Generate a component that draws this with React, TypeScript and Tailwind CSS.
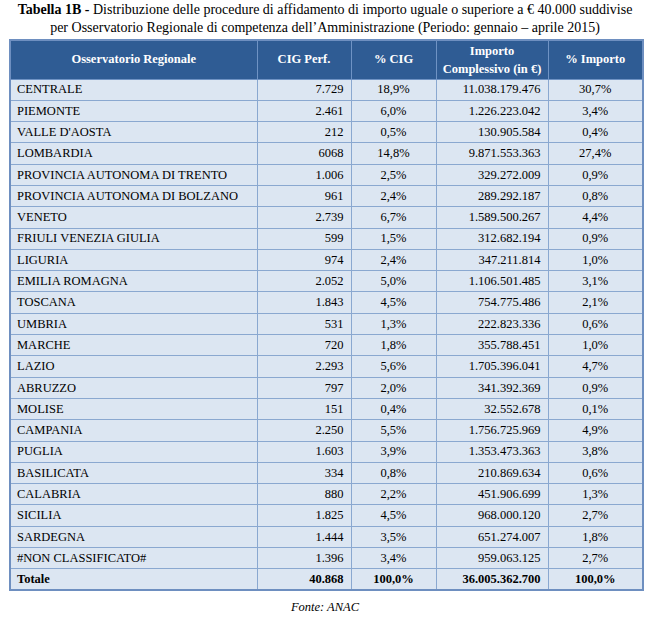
import React from "react";

const rows: [string, string, string, string, string][] = [
  ["CENTRALE", "7.729", "18,9%", "11.038.179.476", "30,7%"],
  ["PIEMONTE", "2.461", "6,0%", "1.226.223.042", "3,4%"],
  ["VALLE D'AOSTA", "212", "0,5%", "130.905.584", "0,4%"],
  ["LOMBARDIA", "6068", "14,8%", "9.871.553.363", "27,4%"],
  ["PROVINCIA AUTONOMA DI TRENTO", "1.006", "2,5%", "329.272.009", "0,9%"],
  ["PROVINCIA AUTONOMA DI BOLZANO", "961", "2,4%", "289.292.187", "0,8%"],
  ["VENETO", "2.739", "6,7%", "1.589.500.267", "4,4%"],
  ["FRIULI VENEZIA GIULIA", "599", "1,5%", "312.682.194", "0,9%"],
  ["LIGURIA", "974", "2,4%", "347.211.814", "1,0%"],
  ["EMILIA ROMAGNA", "2.052", "5,0%", "1.106.501.485", "3,1%"],
  ["TOSCANA", "1.843", "4,5%", "754.775.486", "2,1%"],
  ["UMBRIA", "531", "1,3%", "222.823.336", "0,6%"],
  ["MARCHE", "720", "1,8%", "355.788.451", "1,0%"],
  ["LAZIO", "2.293", "5,6%", "1.705.396.041", "4,7%"],
  ["ABRUZZO", "797", "2,0%", "341.392.369", "0,9%"],
  ["MOLISE", "151", "0,4%", "32.552.678", "0,1%"],
  ["CAMPANIA", "2.250", "5,5%", "1.756.725.969", "4,9%"],
  ["PUGLIA", "1.603", "3,9%", "1.353.473.363", "3,8%"],
  ["BASILICATA", "334", "0,8%", "210.869.634", "0,6%"],
  ["CALABRIA", "880", "2,2%", "451.906.699", "1,3%"],
  ["SICILIA", "1.825", "4,5%", "968.000.120", "2,7%"],
  ["SARDEGNA", "1.444", "3,5%", "651.274.007", "1,8%"],
  ["#NON CLASSIFICATO#", "1.396", "3,4%", "959.063.125", "2,7%"],
];

const td = "border border-[#8aa8d0] h-[21.3px] py-0 leading-none font-['Liberation_Serif',serif]";
const th = "border border-[#6f93c4] text-center font-bold font-['Liberation_Serif',serif]";

export default function App() {
  return (
    <div className="w-[650px] h-[623px] bg-white text-black overflow-hidden font-['Liberation_Serif',serif]">
      <div className="pt-[1px] text-center text-[14px] leading-[18px] whitespace-nowrap font-['Liberation_Serif',serif]">
        <div>
          <span className="font-bold">Tabella 1B - </span>
          Distribuzione delle procedure di affidamento di importo uguale o superiore a € 40.000 suddivise
        </div>
        <div>
          per Osservatorio Regionale di competenza dell’Amministrazione (Periodo: gennaio – aprile 2015)
        </div>
      </div>
      <div className="pl-[9px] pt-[2px]">
        <table className="table-fixed border-collapse border-2 border-[#6e8fc0] text-[12.5px] w-[633px] font-['Liberation_Serif',serif]">
          <colgroup>
            <col className="w-[247px]" />
            <col className="w-[94px]" />
            <col className="w-[85px]" />
            <col className="w-[112px]" />
            <col className="w-[95px]" />
          </colgroup>
          <thead>
            <tr className="bg-[#2f5c94] text-white font-bold h-[39px]">
              <th className={th}>Osservatorio Regionale</th>
              <th className={th}>CIG Perf.</th>
              <th className={th}>% CIG</th>
              <th className={`${th} leading-[18px]`}>
                Importo
                <br />
                Complessivo (in €)
              </th>
              <th className={th}>% Importo</th>
            </tr>
          </thead>
          <tbody className="bg-[#dce6f2]">
            {rows.map((r) => (
              <tr key={r[0]}>
                <td className={`${td} pl-[6px] text-left`}>{r[0]}</td>
                <td className={`${td} pr-[7px] text-right`}>{r[1]}</td>
                <td className={`${td} text-center`}>{r[2]}</td>
                <td className={`${td} pr-[7px] text-right`}>{r[3]}</td>
                <td className={`${td} text-center`}>{r[4]}</td>
              </tr>
            ))}
            <tr className="font-bold">
              <td className={`${td} pl-[6px] text-left`}>Totale</td>
              <td className={`${td} pr-[7px] text-right`}>40.868</td>
              <td className={`${td} text-center`}>100,0%</td>
              <td className={`${td} pr-[7px] text-right`}>36.005.362.700</td>
              <td className={`${td} text-center`}>100,0%</td>
            </tr>
          </tbody>
        </table>
      </div>
      <div className="text-center italic text-[12.5px] mt-[7px] font-['Liberation_Serif',serif]">Fonte: ANAC</div>
    </div>
  );
}
